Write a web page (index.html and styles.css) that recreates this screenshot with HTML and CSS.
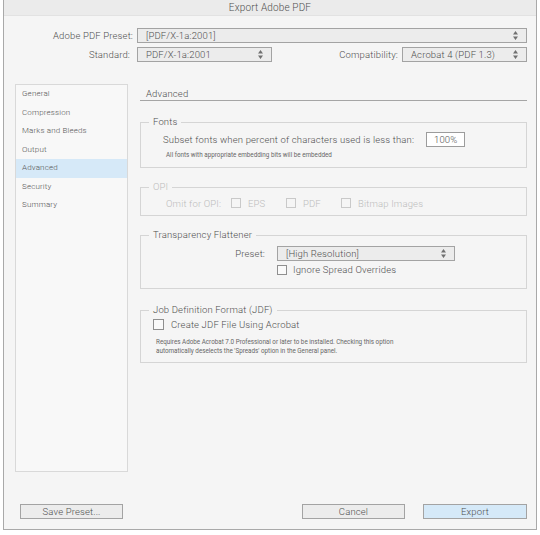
FILE: index.html
```html
<!DOCTYPE html>
<html lang="en">

<head>
    <meta charset="UTF-8">
    <meta name="viewport" content="width=device-width, initial-scale=1.0">
    <title>Export Adobe PDF</title>
    <link rel="stylesheet" href="styles.css">
</head>

<body>
    <div class="window">
        <div class="titlebar">Export Adobe PDF</div>

        <div class="header">
            <div class="row">
                <span class="label label-preset">Adobe PDF Preset:</span>
                <div class="select select-preset">
                    <span>[PDF/X-1a:2001]</span>
                    <svg class="arrows" width="5" height="9" viewBox="0 0 5 9"><path d="M2.5 0 L5 3.5 L0 3.5 Z M2.5 9 L5 5.5 L0 5.5 Z" /></svg>
                </div>
            </div>
            <div class="row">
                <span class="label label-standard">Standard:</span>
                <div class="select select-standard">
                    <span>PDF/X-1a:2001</span>
                    <svg class="arrows" width="5" height="9" viewBox="0 0 5 9"><path d="M2.5 0 L5 3.5 L0 3.5 Z M2.5 9 L5 5.5 L0 5.5 Z" /></svg>
                </div>
                <span class="label label-compat">Compatibility:</span>
                <div class="select select-compat">
                    <span>Acrobat 4 (PDF 1.3)</span>
                    <svg class="arrows" width="5" height="9" viewBox="0 0 5 9"><path d="M2.5 0 L5 3.5 L0 3.5 Z M2.5 9 L5 5.5 L0 5.5 Z" /></svg>
                </div>
            </div>
        </div>

        <div class="main">
            <ul class="nav">
                <li>General</li>
                <li>Compression</li>
                <li>Marks and Bleeds</li>
                <li>Output</li>
                <li class="active">Advanced</li>
                <li>Security</li>
                <li>Summary</li>
            </ul>

            <div class="content">
                <div class="section-title">Advanced</div>

                <fieldset class="group group-fonts">
                    <legend>Fonts</legend>
                    <div class="subset-row">
                        <span>Subset fonts when percent of characters used is less than:</span>
                        <div class="textbox">100%</div>
                    </div>
                    <div class="note note-fonts">All fonts with appropriate embedding bits will be embedded</div>
                </fieldset>

                <fieldset class="group group-opi disabled">
                    <legend>OPI</legend>
                    <div class="opi-row">
                        <span class="opi-label">Omit for OPI:</span>
                        <span class="opi-item"><span class="checkbox"></span><span class="check-text">EPS</span></span>
                        <span class="opi-item"><span class="checkbox"></span><span class="check-text">PDF</span></span>
                        <span class="opi-item"><span class="checkbox"></span><span class="check-text">Bitmap Images</span></span>
                    </div>
                </fieldset>

                <fieldset class="group group-flattener">
                    <legend>Transparency Flattener</legend>
                    <div class="preset-row">
                        <span class="preset-label">Preset:</span>
                        <div class="select select-flattener">
                            <span>[High Resolution]</span>
                            <svg class="arrows" width="5" height="9" viewBox="0 0 5 9"><path d="M2.5 0 L5 3.5 L0 3.5 Z M2.5 9 L5 5.5 L0 5.5 Z" /></svg>
                        </div>
                    </div>
                    <div class="spread-row">
                        <span class="checkbox"></span><span class="check-text">Ignore Spread Overrides</span>
                    </div>
                </fieldset>

                <fieldset class="group group-jdf">
                    <legend>Job Definition Format (JDF)</legend>
                    <div class="jdf-row">
                        <span class="checkbox big"></span><span class="check-text">Create JDF File Using Acrobat</span>
                    </div>
                    <div class="note note-jdf">Requires Adobe Acrobat 7.0 Professional or later to be installed. Checking this option<br>automatically deselects the 'Spreads' option in the General panel.</div>
                </fieldset>
            </div>
        </div>

        <div class="footer">
            <button class="button">Save Preset...</button>
            <div class="spacer"></div>
            <button class="button">Cancel</button>
            <button class="button primary">Export</button>
        </div>
    </div>
</body>

</html>
```

FILE: styles.css
```css
* {
    box-sizing: border-box;
}
body {
    margin: 0;
    background-color: #fff;
    font-family: Roboto, "Liberation Sans", sans-serif;
    font-weight: 300;
    letter-spacing: 0.15px;
    color: #4f4f4f;
}
.window {
    margin-left: 3px;
    width: 534px;
    height: 530px;
    background-color: #f5f5f5;
    border: 1px solid #a9a9a9;
    border-top: none;
}
.titlebar {
    height: 16px;
    line-height: 16px;
    text-align: center;
    font-size: 10px;
    background-color: #ebebeb;
    border-bottom: 1px solid #e2e2e2;
}

/* top preset rows */
.header {
    padding: 12px 9px 0 0;
}
.row {
    display: flex;
    align-items: center;
    height: 15px;
    margin-bottom: 4px;
    font-size: 9.5px;
}
.label {
    text-align: right;
    white-space: nowrap;
}
.label-preset {
    width: 129px;
    margin-right: 4px;
}
.label-standard {
    width: 126px;
    margin-right: 7px;
}
.label-compat {
    flex: 1;
    margin-right: 4px;
}
.select {
    display: flex;
    align-items: center;
    justify-content: space-between;
    height: 15px;
    padding: 0 8px 0 8px;
    background-color: #ececec;
    border: 1px solid #a3a3a3;
    font-size: 9.5px;
}
.select-preset {
    flex: 1;
}
.select-standard {
    width: 135px;
}
.select-compat {
    width: 125px;
}
.arrows {
    fill: #707070;
}

/* body */
.main {
    display: flex;
    margin-top: 22px;
}
.nav {
    list-style: none;
    margin: 0 0 0 11px;
    padding: 0;
    width: 113px;
    height: 388px;
    background-color: #f8f8f8;
    border: 1px solid #d9d9d9;
    font-size: 8px;
    color: #555;
}
.nav li {
    height: 18.5px;
    line-height: 18px;
    padding-left: 6px;
}
.nav li.active {
    background-color: #d6e9f8;
}
.content {
    margin-left: 12px;
    width: 387px;
}
.section-title {
    height: 17px;
    padding: 4px 0 0 6px;
    font-size: 9.5px;
    line-height: 11px;
    border-bottom: 1px solid #a5a5a5;
}

.group {
    margin: 13px 0 0 0;
    padding: 0;
    border: 1px solid #d5d5d5;
    font-size: 9.5px;
}
.group legend {
    margin-left: 8px;
    padding: 0 4px;
    line-height: 12px;
}
.group-fonts {
    margin-top: 15px;
    padding-bottom: 7px;
}
.subset-row {
    display: flex;
    align-items: center;
    margin-top: 4px;
    padding-left: 22px;
}
.textbox {
    width: 39px;
    height: 15px;
    line-height: 13px;
    margin-left: 12px;
    padding-left: 7px;
    background-color: #fff;
    border: 1px solid #9c9c9c;
}
.note {
    font-size: 6.3px;
    font-weight: 400;
    letter-spacing: 0;
    line-height: 9px;
    color: #666;
}
.note-fonts {
    margin-top: 4px;
    padding-left: 25px;
}

.disabled {
    color: #bcbcbc;
}
.group-opi {
    padding-bottom: 6px;
}
.opi-row {
    display: flex;
    align-items: center;
    height: 12px;
    margin-top: 4px;
    padding-left: 25px;
}
.opi-label {
    width: 65px;
}
.opi-item {
    display: flex;
    align-items: center;
    width: 55px;
}
.checkbox {
    display: inline-block;
    flex: none;
    width: 10px;
    height: 10px;
    border: 1px solid #8f8f8f;
    background-color: #fafafa;
}
.disabled .checkbox {
    border-color: #c9c9c9;
    background-color: transparent;
}
.check-text {
    margin-left: 7px;
    white-space: nowrap;
}

.group-flattener {
    padding-bottom: 13px;
}
.preset-row {
    display: flex;
    align-items: center;
    margin-top: 5px;
}
.preset-label {
    width: 124px;
    margin-right: 12px;
    text-align: right;
}
.select-flattener {
    width: 178px;
}
.spread-row {
    display: flex;
    align-items: center;
    margin-top: 3px;
    padding-left: 136px;
}
.spread-row .check-text {
    margin-left: 6px;
}

.group-jdf {
    margin-top: 15px;
    padding-bottom: 6px;
}
.jdf-row {
    display: flex;
    align-items: center;
    margin-top: 3px;
    padding-left: 12px;
}
.checkbox.big {
    width: 11px;
    height: 11px;
}
.note-jdf {
    margin-top: 8px;
    padding-left: 15px;
}

/* buttons */
.footer {
    display: flex;
    padding: 32px 9px 0 16px;
}
.spacer {
    flex: 1;
}
.button {
    width: 103px;
    height: 15px;
    padding: 0;
    font-family: inherit;
    font-weight: 300;
    font-size: 9.5px;
    letter-spacing: 0.15px;
    color: #4f4f4f;
    background-color: #ececec;
    border: 1px solid #a3a3a3;
}
.button + .button {
    margin-left: 18px;
}
.button.primary {
    width: 104px;
    background-color: #d5e9f8;
}
```
